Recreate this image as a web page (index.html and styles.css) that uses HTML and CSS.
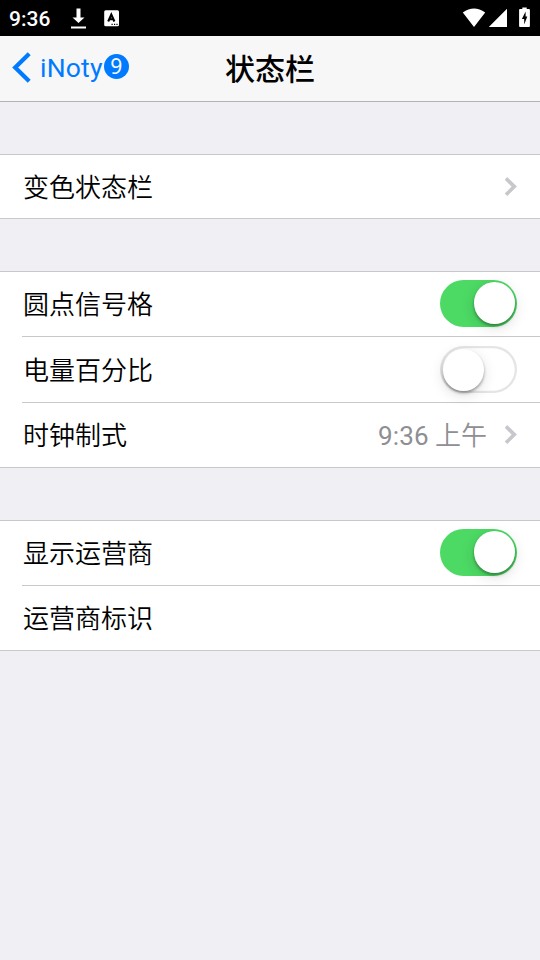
FILE: index.html
```html
<!DOCTYPE html>
<html lang="zh-CN">
<head>
<meta charset="utf-8">
<title>状态栏</title>
<link rel="stylesheet" href="styles.css">
</head>
<body>
<div class="status">
  <span class="clock">9:36</span>
  <svg class="download" width="16" height="22" viewBox="0 0 16 22"><path d="M5.5 1.5h4v9h4l-6 5.5-6-5.5h4zM0 19.5h15v2H0z" fill="#fff"/></svg>
  <svg class="keyboard" width="16" height="17" viewBox="0 0 16 17"><rect x=".2" y=".3" width="14.8" height="16" rx="1.5" fill="#fff"/><path d="M4.2 11.5 7.3 4.5l3.1 7M5.5 9.3h3.6" fill="none" stroke="#000" stroke-width="2.1"/><path d="M7.5 13.7h1.2v1.2H7.5zM10 13.7h1.2v1.2H10zM12.4 13.7h1.2v1.2h-1.2z"/></svg>
  <svg class="signals" width="69" height="22" viewBox="0 0 69 22"><path d="M.8 5.5Q12-2.5 23.2 5.5L12 20zM26.8 20 45 1.7V20z" fill="#fff"/><path d="M58 2h2.3V.4h4.4V2H67q.9 0 .9.9v16.2q0 .9-.9.9h-9q-.9 0-.9-.9V2.9q0-.9.9-.9z" fill="#fff"/><path d="M63.6 4.6 59.9 12h2.3v5.5L65.3 9.6h-1.7z"/></svg>
</div>
<header class="nav">
  <a class="back">
    <svg width="20" height="32" viewBox="0 0 20 32"><path d="M18.2 1.8 4.2 15.5l14 13.7" fill="none" stroke="#007aff" stroke-width="4.2"/></svg>
    <span class="back-label">iNoty</span><span class="badge">9</span>
  </a>
  <h1>状态栏</h1>
</header>
<main>
  <section class="group">
    <div class="row short"><span class="label">变色状态栏</span><svg class="chevron" width="13" height="20" viewBox="0 0 13 20"><path d="M2 1.4 10.3 9.6 2 17.8" /></svg></div>
  </section>
  <section class="group">
    <div class="row"><span class="label">圆点信号格</span><i class="switch on"></i></div>
    <div class="row tall"><span class="label">电量百分比</span><i class="switch"></i></div>
    <div class="row"><span class="label">时钟制式</span><span class="value"><span class="time">9:36</span> 上午</span><svg class="chevron" width="13" height="20" viewBox="0 0 13 20"><path d="M2 1.4 10.3 9.6 2 17.8" /></svg></div>
  </section>
  <section class="group">
    <div class="row"><span class="label">显示运营商</span><i class="switch on"></i></div>
    <div class="row"><span class="label">运营商标识</span></div>
  </section>
</main>
</body>
</html>
```
FILE: styles.css
```css
* { box-sizing: border-box; }
body {
  margin: 0;
  min-height: 960px;
  background: #efeff4;
  color: #000;
  font-family: Roboto, "Noto Sans CJK SC", sans-serif;
}
svg { display: block; flex: none; }
.status {
  display: flex;
  height: 36px;
  padding: 0 9px;
  background: #000;
  color: #fff;
}
.clock {
  width: 62px;
  font-size: 21px;
  font-weight: 500;
  line-height: 38px;
}
.download { margin-top: 7px; }
.keyboard { margin: 10px 0 0 17px; }
.signals { margin: 7px 0 0 auto; }
.nav {
  display: grid;
  grid-template-columns: 1fr auto 1fr;
  height: 66px;
  border-bottom: 1px solid #b2b2b6;
  background: #f7f7f7;
}
.back {
  display: flex;
  padding: 16px 0 0 11px;
  color: #007aff;
}
.back-label {
  margin-left: 9px;
  font-size: 26.5px;
  letter-spacing: .2px;
  line-height: 32px;
}
.badge {
  width: 25px;
  height: 25px;
  margin: 2px 0 0 1px;
  border-radius: 50%;
  background: #007aff;
  color: #f7f7f7;
  font: 21px/24px "Noto Sans", sans-serif;
  text-align: center;
}
h1 {
  margin: 0;
  font-size: 30px;
  font-weight: 500;
  line-height: 67px;
}
.group {
  margin-top: 52px;
  border: solid #c8c7cc;
  border-width: 1px 0;
  background: #fff;
}
.row {
  display: flex;
  align-items: center;
  height: 64px;
  padding: 0 23px 0 1px;
  margin-left: 22px;
  font-size: 26px;
  font-weight: 350;
  line-height: 38px;
}
.row + .row {
  height: 65px;
  border-top: 1px solid #c8c7cc;
}
.row.short { height: 63px; }
.row + .row.tall { height: 66px; }
.label { padding-top: 2px; }
.value {
  margin-left: auto;
  padding-top: 2px;
  color: #8e8e93;
}
.time {
  font-weight: 400;
  letter-spacing: .15px;
}
.chevron {
  margin-left: auto;
  fill: none;
  stroke: #c7c7cc;
  stroke-width: 3.6;
}
.value + .chevron { margin-left: 17px; }
.switch {
  display: flex;
  width: 77px;
  height: 47px;
  margin-left: auto;
  padding: 2.5px;
  border-radius: 24px;
  box-shadow: inset 0 0 0 2.3px #e5e5e5;
}
.switch::before {
  content: "";
  width: 41.5px;
  height: 42px;
  border-radius: 50%;
  background: #fff;
  box-shadow: 0 2px 3px rgba(0, 0, 0, .35), 0 4px 14px rgba(0, 0, 0, .13);
}
.switch.on {
  justify-content: flex-end;
  margin-bottom: 2px;
  padding: 2px;
  background: #4cd964;
  box-shadow: none;
}
```
